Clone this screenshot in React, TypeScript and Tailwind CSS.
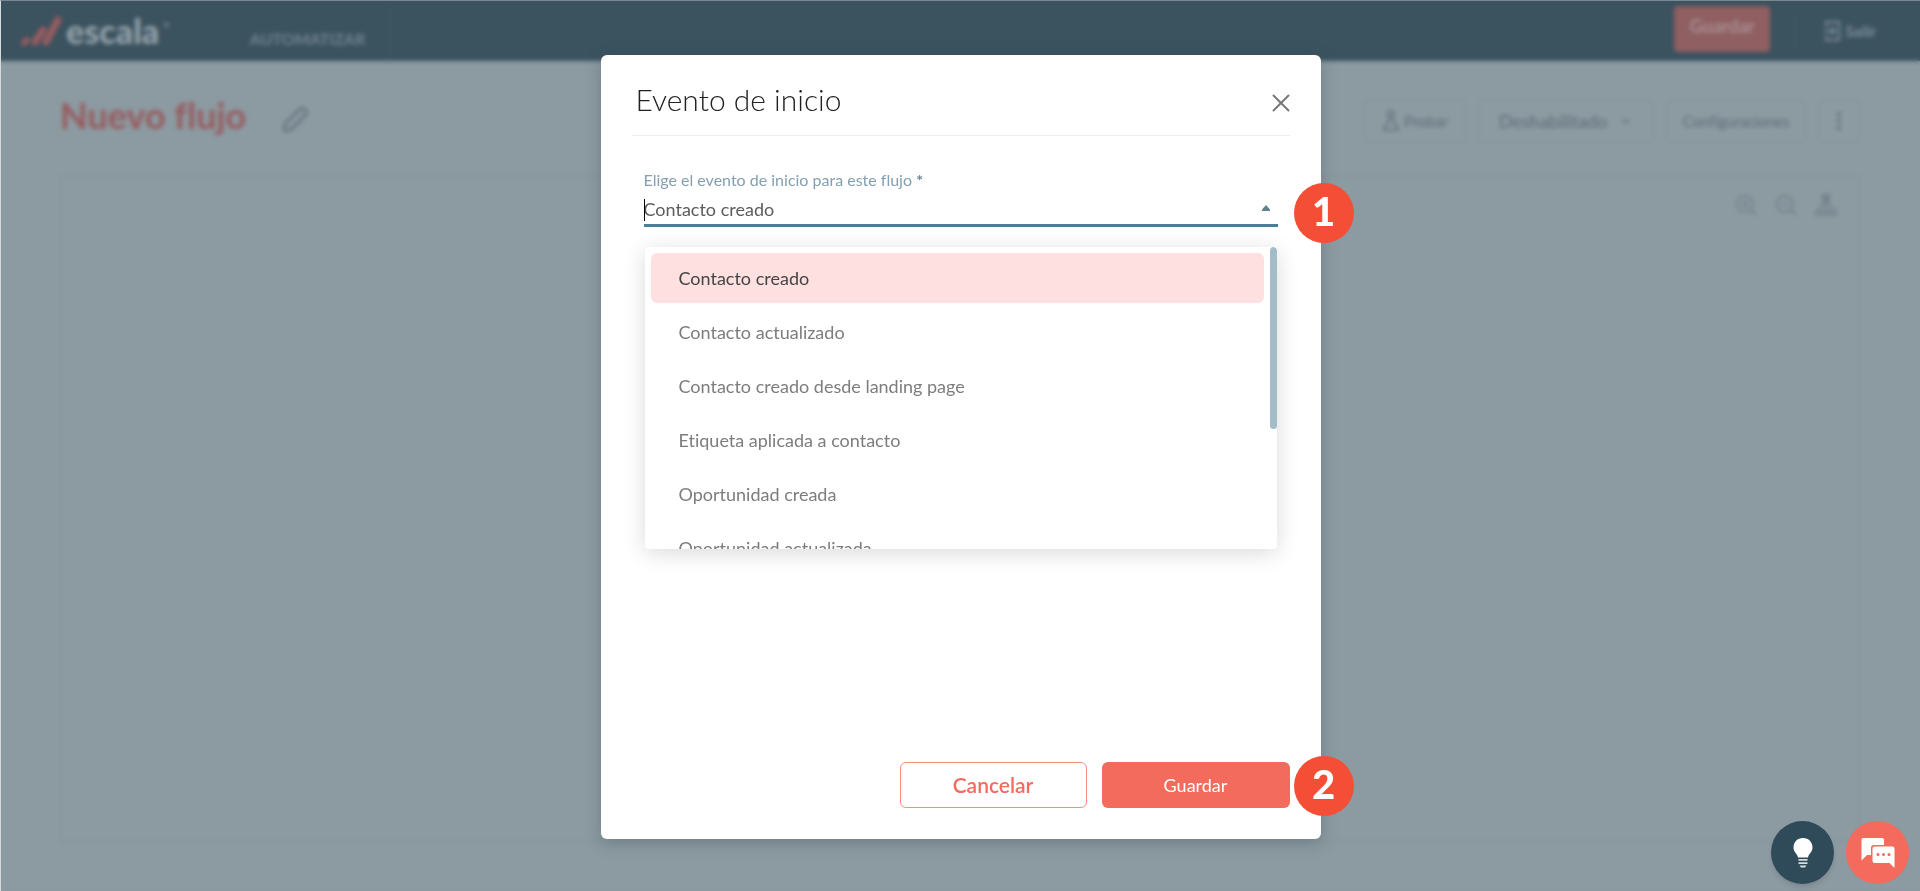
import { useState } from "react";
import { ChevronDown, MoreVertical, X, ZoomIn, ZoomOut } from "lucide-react";

const EVENTS = [
  "Contacto creado",
  "Contacto actualizado",
  "Contacto creado desde landing page",
  "Etiqueta aplicada a contacto",
  "Oportunidad creada",
  "Oportunidad actualizada",
];

const TOOL_BUTTON =
  "flex h-11 items-center justify-center rounded-md border border-[#82919b] text-[#5e6f7b]";

function Logo() {
  return (
    <div className="flex items-center gap-1">
      <svg width="42" height="32" viewBox="0 0 42 32" fill="none" stroke="#965c60" strokeLinecap="round" aria-hidden="true">
        <path d="M4 28L7 25" strokeWidth="6" />
        <path d="M15 27L23 15" strokeWidth="7" />
        <path d="M26 27L38 5" strokeWidth="7" />
      </svg>
      <span className="text-[34px] leading-none font-black text-[#93a2aa]">escala</span>
      <span className="mb-3 text-[8px] text-[#93a2aa]">®</span>
    </div>
  );
}

function ExitIcon() {
  return (
    <svg width="18" height="22" viewBox="0 0 18 22" fill="none" stroke="currentColor" strokeWidth="2" aria-hidden="true">
      <path d="M3 7V2H16V20H3V15" />
      <path d="M1 11H11M8 7L12 11L8 15" />
    </svg>
  );
}

function FlaskIcon() {
  return (
    <svg width="18" height="22" viewBox="0 0 18 22" fill="none" stroke="currentColor" strokeWidth="1.500" strokeLinejoin="round" aria-hidden="true">
      <circle cx="9" cy="4" r="3" />
      <path d="M7 7V11L2 18V20H16V18L11 11V7" />
    </svg>
  );
}

function TreeIcon() {
  return (
    <svg width="24" height="24" viewBox="0 0 24 24" fill="none" stroke="currentColor" strokeWidth="2" aria-hidden="true">
      <path d="M9 2H15V7H9Z" fill="currentColor" />
      <path d="M12 7V18M11 7C11 13 5 12 5 18M13 7C13 13 19 12 19 18" />
      <path d="M2 18H7V22H2ZM10 18H14V22H10ZM17 18H22V22H17Z" />
    </svg>
  );
}

function TopBar() {
  return (
    <header className="flex h-[61px] items-stretch bg-[#3b525f] pl-5 text-[#93a2aa]">
      <Logo />
      <nav className="ml-14 flex items-center border-r border-[#435b68] px-5 pt-4">
        <a href="#automatizar" className="px-1 text-[16px] font-bold text-[#71838e]">
          AUTOMATIZAR
        </a>
      </nav>
      <div className="ml-auto flex items-center pr-11 text-[#7b8d97]">
        <button type="button" className="mb-1 h-[46px] w-24 rounded bg-[#8f5f61] pb-1 text-[18px] font-bold text-[#a98d92]">
          Guardar
        </button>
        <div className="mr-7 ml-6 h-8 w-px bg-[#4a606c]" />
        <button type="button" className="flex items-center gap-1 text-[16px] font-bold">
          <ExitIcon />
          Salir
        </button>
      </div>
    </header>
  );
}

function Workspace() {
  return (
    <main className="flex flex-1 flex-col px-[60px] pt-[38px] pb-[49px]">
      <div className="flex h-11 items-center">
        <h1 className="pb-3 text-[36px] leading-none font-bold text-[#965c60]">Nuevo flujo</h1>
        <button type="button" aria-label="Editar nombre" className="ml-9 pb-1 text-[#64757f]">
          <svg width="28" height="28" viewBox="0 0 28 28" fill="none" stroke="currentColor" strokeWidth="2.500" strokeLinejoin="round" aria-hidden="true">
            <path d="M3 19L18 4Q20 2 22.500 4.500Q26 7 24 9.500L9 24.500L3 26Q2 26 2 25Z" />
          </svg>
        </button>
        <div className="ml-auto flex gap-3">
          <button type="button" className={`${TOOL_BUTTON} w-[102px] gap-1 text-[15px]`}>
            <FlaskIcon />
            Probar
          </button>
          <button type="button" className={`${TOOL_BUTTON} w-[176px] gap-3 text-[18px]`}>
            Deshabilitado
            <ChevronDown size={14} />
          </button>
          <button type="button" className={`${TOOL_BUTTON} w-[140px] text-[15px]`}>
            Configuraciones
          </button>
          <button type="button" aria-label="Más opciones" className={`${TOOL_BUTTON} w-[42px]`}>
            <MoreVertical size={24} />
          </button>
        </div>
      </div>
      <section className="mt-8 flex flex-1 items-start justify-end gap-4 border-2 border-[#87969e] px-5 py-4 text-[#73848e]">
        <button type="button" aria-label="Acercar">
          <ZoomIn size={24} />
        </button>
        <button type="button" aria-label="Alejar">
          <ZoomOut size={24} />
        </button>
        <button type="button" aria-label="Organizar">
          <TreeIcon />
        </button>
      </section>
    </main>
  );
}

function StepBadge({ step }: { step: number }) {
  return (
    <span className="flex size-[60px] items-center justify-center rounded-full bg-[#f44f36] pb-1 text-[40px] leading-none font-black text-white">
      {step}
    </span>
  );
}

function EventField() {
  const [value, setValue] = useState(EVENTS[0]);

  return (
    <div className="relative mx-3 mt-[34px]">
      <label htmlFor="evento" className="block text-[16px] leading-5 text-[#84a0b0]">
        Elige el evento de inicio para este flujo <span className="font-bold text-[#668495]">*</span>
      </label>
      <div className="relative mt-px flex h-9 items-center border-b-3 border-[#48809a]">
        <span className="absolute top-2 left-0 h-[22px] w-px bg-black" />
        <input
          id="evento"
          role="combobox"
          aria-expanded="true"
          aria-controls="eventos"
          value={value}
          onChange={(e) => setValue(e.target.value)}
          className="h-7 flex-1 pt-0.5 text-[18px] text-[#5c5c5c] outline-none"
        />
        <svg width="8" height="6" viewBox="0 0 8 6" fill="#64808f" className="mr-2" aria-hidden="true">
          <path d="M4 0L8 4.500V6H0V4.500Z" />
        </svg>
        <div className="absolute -top-2 left-full ml-4">
          <StepBadge step={1} />
        </div>
      </div>
      <div className="absolute inset-x-px top-full mt-5 flex h-[302px] overflow-hidden rounded bg-white shadow-[0_4px_22px_rgba(0,0,0,0.15)]">
        <ul id="eventos" role="listbox" className="flex-1 space-y-1 p-[6px]">
          {EVENTS.map((event) => (
            <li
              key={event}
              role="option"
              aria-selected={event === value}
              className="flex h-[50px] items-center rounded-md px-7 text-[18px] text-[#7d7d7d] aria-selected:bg-[#ffe0e1] aria-selected:text-[#444]"
            >
              {event}
            </li>
          ))}
        </ul>
        <div className="h-[182px] w-[7px] rounded-full bg-[#a2bcc8]" />
      </div>
    </div>
  );
}

function StartEventModal() {
  return (
    <div className="fixed inset-0 flex justify-center border-t border-l border-t-[#788991] border-l-[#d5dadd] pt-[54px] pb-[52px] backdrop-blur-[2px]">
      <div role="dialog" aria-labelledby="titulo" className="flex w-[720px] flex-col rounded-md bg-white px-[31px] pb-[31px] shadow-[0_4px_16px_rgba(60,75,90,0.35)]">
        <div className="flex h-[81px] items-center justify-between border-b border-[#ededf0] pt-3">
          <h2 id="titulo" className="pb-1 pl-1 text-[30px] leading-9 font-light text-[#222]">
            Evento de inicio
          </h2>
          <button type="button" aria-label="Cerrar" className="-mr-1.5 pt-1 text-[#777]">
            <X size={30} strokeWidth={1.5} />
          </button>
        </div>
        <EventField />
        <div className="relative mt-auto flex justify-end gap-[15px]">
          <button type="button" className="h-[46px] w-[187px] rounded-md border border-[#f68d82] text-[21px] font-semibold text-[#f26b5e]">
            Cancelar
          </button>
          <button type="button" className="h-[46px] w-[188px] rounded-md bg-[#f36b5d] text-[18px] text-white">
            Guardar
          </button>
          <div className="absolute -top-1.5 left-full ml-1">
            <StepBadge step={2} />
          </div>
        </div>
      </div>
    </div>
  );
}

function HelpButtons() {
  return (
    <div className="fixed right-[11px] bottom-[7px] flex gap-3">
      <button type="button" aria-label="Ideas" className="flex size-[63px] items-center justify-center rounded-full bg-[#2f4a58] shadow-md">
        <svg width="20" height="30" viewBox="0 0 20 30" fill="#fff" aria-hidden="true">
          <path d="M10 0C4.300 0 .5 4.200.5 9.500C.5 14.500 4.500 15.500 5 19.500H15C15.500 15.500 19.500 14.500 19.500 9.500C19.500 4.200 15.700 0 10 0Z" />
          <path d="M5.500 21H14.500V22.800H5.500ZM5.500 24.200H14.500V26H5.500ZM6.500 27.400H13.500L12 29.600H8Z" fill="#d5dde0" />
        </svg>
      </button>
      <button type="button" aria-label="Chat" className="flex size-[63px] items-center justify-center rounded-full bg-[#f46a5c]">
        <svg width="34" height="30" viewBox="0 0 34 30" fill="#fff" aria-hidden="true">
          <path d="M2 0H21Q23 0 23 2V7H13Q10 7 10 10V17H6L.5 22.500V2Q.5 0 2 0Z" />
          <path d="M13.500 8.500H31.500Q33.500 8.500 33.500 10.500V30L28.500 25H13.500Q11.500 25 11.500 23V10.500Q11.500 8.500 13.500 8.500Z" />
          <g fill="#f46a5c">
            <circle cx="17" cy="16.500" r="1.500" />
            <circle cx="22.500" cy="16.500" r="1.500" />
            <circle cx="28" cy="16.500" r="1.500" />
          </g>
        </svg>
      </button>
    </div>
  );
}

export default function App() {
  return (
    <div className="flex min-h-screen flex-col bg-[#8c9aa1] font-['Lato',sans-serif] [font-variant-ligatures:none]">
      <TopBar />
      <Workspace />
      <StartEventModal />
      <HelpButtons />
    </div>
  );
}
